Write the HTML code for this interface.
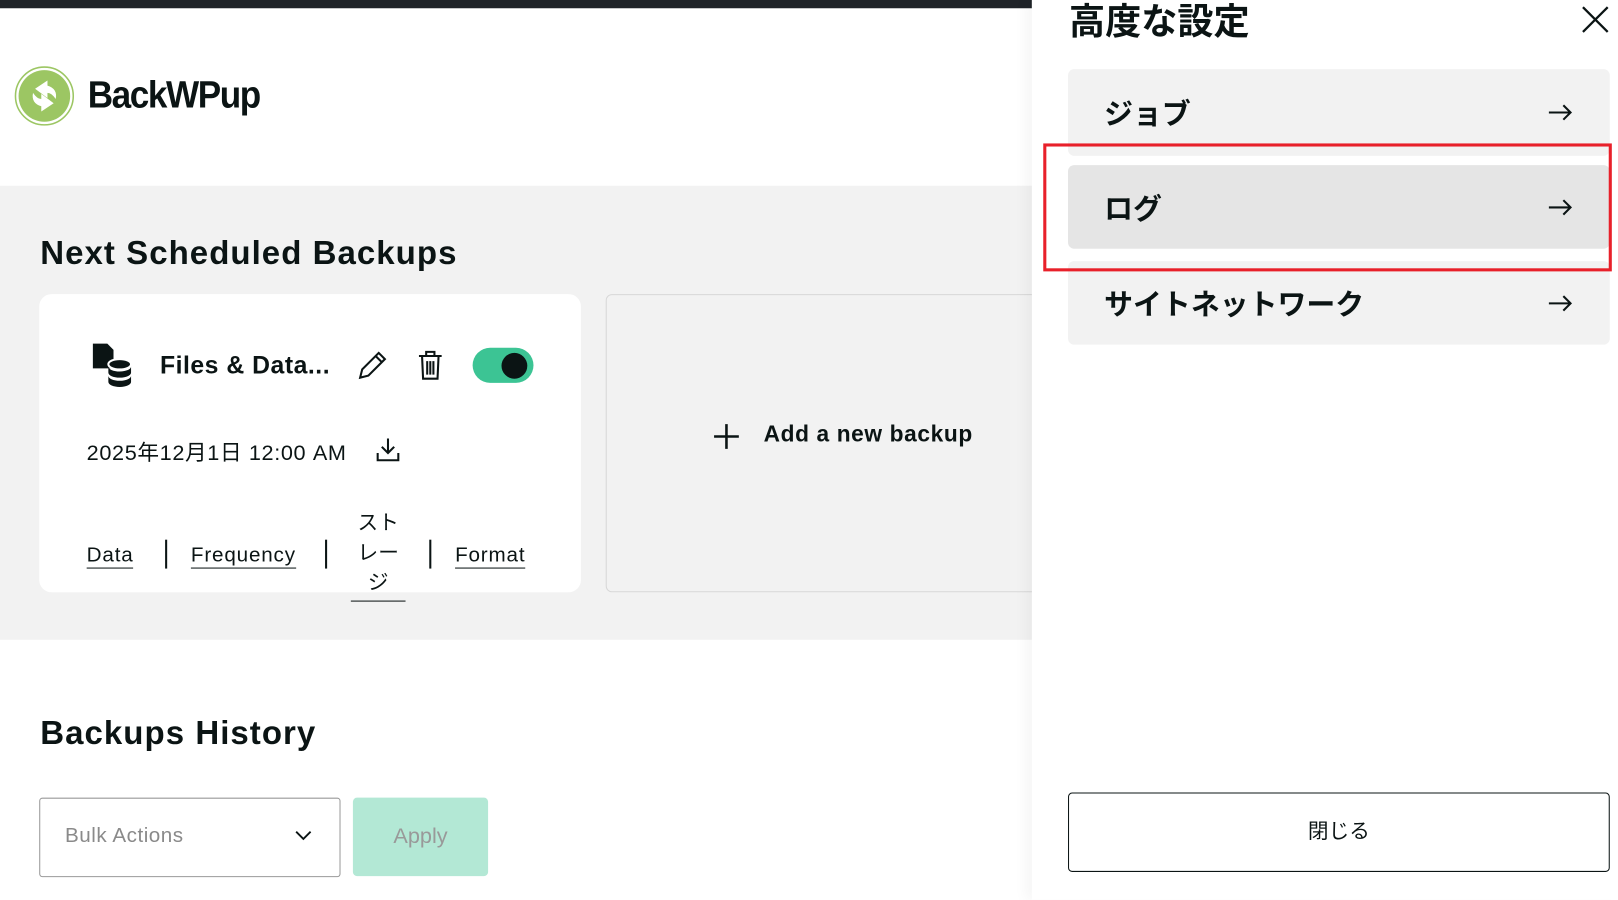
<!DOCTYPE html>
<html><head><meta charset="utf-8"><style>
html,body{margin:0;padding:0;width:1618px;height:899px;overflow:hidden;background:#fff;}
#w{position:absolute;left:0;top:0;width:1568px;height:872px;transform:scale(1.0319);transform-origin:0 0;font-family:"Liberation Sans","Noto Sans CJK JP",sans-serif;color:#0b1414;}
.a{position:absolute;}
.lk{position:absolute;font-size:20px;border-bottom:1.5px solid #0b1414;line-height:24px;letter-spacing:0.8px;}
.sep{position:absolute;width:1.5px;height:28px;background:#0b1414;top:523px;}
.item{position:absolute;left:1035px;width:525px;border-radius:6px;font-size:28px;font-weight:bold;}
.item span{position:absolute;left:35px;top:50%;transform:translateY(-50%);}
.item svg{position:absolute;right:36px;top:50%;transform:translateY(-50%);}
</style></head><body><div id="w">
<div class="a" style="left:0;top:0;width:1000px;height:8px;background:#1f2328"></div>
<svg class="a" style="left:14px;top:64px" width="58" height="58" viewBox="0 0 58 58"><circle cx="29" cy="29" r="28" fill="#fff" stroke="#9cc663" stroke-width="1.5"/><circle cx="29" cy="29" r="25" fill="#9cc663"/><path d="M20 22 L32 14 L32 19 Q42 22 40 32 Q36 26 32 26 L32 31 Z" fill="#fff"/><path d="M38 36 L26 44 L26 39 Q16 36 18 26 Q22 32 26 32 L26 27 Z" fill="#fff"/></svg>
<div class="a" style="left:85px;top:71px;font-size:37px;font-weight:bold;letter-spacing:-1.5px;transform:scaleX(0.92);transform-origin:0 0">BackWPup</div>
<div class="a" style="left:0;top:180px;width:1000px;height:440px;background:#f2f2f2"></div>
<div class="a" style="left:39px;top:227px;font-size:32px;font-weight:bold;letter-spacing:1px">Next Scheduled Backups</div>
<div class="a" style="left:38px;top:285px;width:525px;height:289px;background:#fff;border-radius:12px"></div>
<svg class="a" style="left:88px;top:331px" width="40" height="46" viewBox="0 0 40 46"><path d="M2 2h14l6 6v18H2z" fill="#0b1414"/><ellipse cx="28" cy="22" rx="11" ry="5" fill="#0b1414" stroke="#fff" stroke-width="2"/><path d="M17 24v6c0 3 5 5 11 5s11-2 11-5v-6c0 3-5 5-11 5s-11-2-11-5z" fill="#0b1414"/><path d="M17 33v6c0 3 5 5 11 5s11-2 11-5v-6c0 3-5 5-11 5s-11-2-11-5z" fill="#0b1414"/></svg>
<div class="a" style="left:155px;top:341px;font-size:24px;font-weight:bold;letter-spacing:0.5px">Files &amp; Data...</div>
<svg class="a" style="left:345px;top:338px" width="32" height="32" viewBox="0 0 32 32"><path d="M4 28l2-8L22 4l6 6L12 26z M19 7l6 6" fill="none" stroke="#0b1414" stroke-width="2"/></svg>
<svg class="a" style="left:404px;top:339px" width="26" height="30" viewBox="0 0 26 30"><path d="M2 6h22M9 6V2h8v4M5 6l1 22h14l1-22M10 11v13M13 11v13M16 11v13" fill="none" stroke="#0b1414" stroke-width="2"/></svg>
<div class="a" style="left:458px;top:337px;width:59px;height:34px;border-radius:17px;background:#3cc494"></div>
<div class="a" style="left:486px;top:342px;width:25px;height:25px;border-radius:50%;background:#0b1414"></div>
<div class="a" style="left:84px;top:423px;font-size:21px;letter-spacing:0.6px">2025年12月1日 12:00 AM</div>
<svg class="a" style="left:363px;top:423px" width="26" height="26" viewBox="0 0 26 26"><path d="M13 2v14M7 10l6 6 6-6M3 16v7h20v-7" fill="none" stroke="#0b1414" stroke-width="2"/></svg>
<div class="lk" style="left:84px;top:526px">Data</div>
<div class="sep" style="left:160px"></div>
<div class="lk" style="left:185px;top:526px">Frequency</div>
<div class="sep" style="left:315px"></div>
<div class="a" style="left:340px;top:493px;width:53px;font-size:20px;line-height:29px;text-align:center;border-bottom:1.5px solid #0b1414;padding-bottom:2px">スト<br>レー<br>ジ</div>
<div class="sep" style="left:416px"></div>
<div class="lk" style="left:441px;top:526px">Format</div>
<div class="a" style="left:587px;top:285px;width:420px;height:287px;border:1px solid #d8d8d8;border-radius:6px;background:#f2f2f2"></div>
<svg class="a" style="left:690px;top:409px" width="28" height="28" viewBox="0 0 28 28"><path d="M14 2v24M2 14h24" stroke="#0b1414" stroke-width="2.5"/></svg>
<div class="a" style="left:740px;top:408px;font-size:22px;font-weight:bold;letter-spacing:0.6px">Add a new backup</div>
<div class="a" style="left:39px;top:692px;font-size:32px;font-weight:bold;letter-spacing:1px">Backups History</div>
<div class="a" style="left:38px;top:773px;width:290px;height:75px;border:1px solid #999;border-radius:3px"></div>
<div class="a" style="left:63px;top:799px;font-size:20px;color:#8a8a8a;letter-spacing:0.5px">Bulk Actions</div>
<svg class="a" style="left:285px;top:804px" width="18" height="12" viewBox="0 0 18 12"><path d="M2 2l7 7 7-7" fill="none" stroke="#0b1414" stroke-width="1.8"/></svg>
<div class="a" style="left:342px;top:773px;width:131px;height:76px;background:#b3e8d5;border-radius:4px;font-size:21px;color:#999;text-align:center;line-height:76px">Apply</div>
<div class="a" style="left:1000px;top:0;width:568px;height:872px;background:#fff;box-shadow:-6px 0 12px rgba(0,0,0,0.04)"></div>
<div class="a" style="left:1036px;top:-7px;font-size:35px;font-weight:bold">高度な設定</div>
<svg class="a" style="left:1532px;top:5px" width="28" height="28" viewBox="0 0 28 28"><path d="M2 2l24 24M26 2L2 26" stroke="#0b1414" stroke-width="2.2"/></svg>
<div class="item" style="top:67px;height:84px;background:#f2f2f2"><span>ジョブ</span><svg width="24" height="16" viewBox="0 0 24 16"><path d="M1 8h21M15 1l7 7-7 7" fill="none" stroke="#0b1414" stroke-width="2"/></svg></div>
<div class="item" style="top:160px;height:81px;background:#e5e5e5"><span>ログ</span><svg width="24" height="16" viewBox="0 0 24 16"><path d="M1 8h21M15 1l7 7-7 7" fill="none" stroke="#0b1414" stroke-width="2"/></svg></div>
<div class="item" style="top:253px;height:81px;background:#f2f2f2"><span>サイトネットワーク</span><svg width="24" height="16" viewBox="0 0 24 16"><path d="M1 8h21M15 1l7 7-7 7" fill="none" stroke="#0b1414" stroke-width="2"/></svg></div>
<div class="a" style="left:1011px;top:139px;width:545px;height:118px;border:3px solid #e8202a"></div>
<div class="a" style="left:1035px;top:768px;width:523px;height:75px;border:1.5px solid #0b1414;border-radius:4px;text-align:center;line-height:75px;font-size:20px">閉じる</div>
</div></body></html>
